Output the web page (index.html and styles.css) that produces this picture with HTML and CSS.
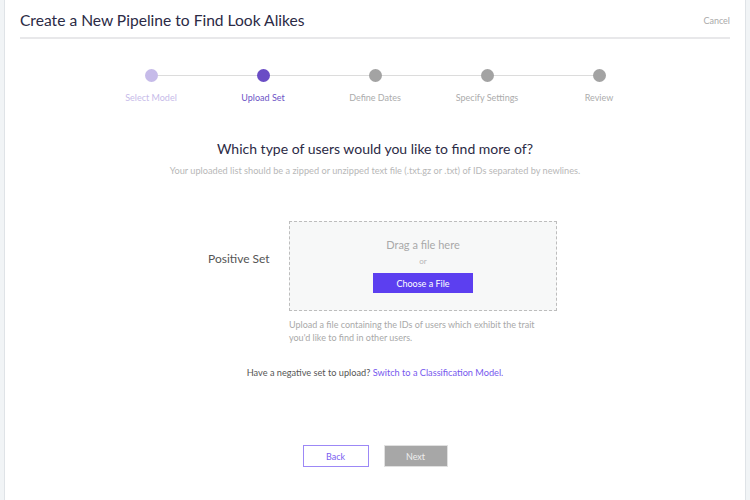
FILE: index.html
```html
<!DOCTYPE html>
<html lang="en">
<head>
    <meta charset="UTF-8">
    <title>Create a New Pipeline</title>
    <link rel="stylesheet" href="styles.css">
</head>
<body>
    <div class="panel">
        <div class="header">
            <h1>Create a New Pipeline to Find Look Alikes</h1>
            <a class="cancel" href="#">Cancel</a>
        </div>

        <div class="steps">
            <div class="step done"><span class="dot"></span><span class="label">Select Model</span></div>
            <div class="step active"><span class="dot"></span><span class="label">Upload Set</span></div>
            <div class="step"><span class="dot"></span><span class="label">Define Dates</span></div>
            <div class="step"><span class="dot"></span><span class="label">Specify Settings</span></div>
            <div class="step"><span class="dot"></span><span class="label">Review</span></div>
        </div>

        <h2>Which type of users would you like to find more of?</h2>
        <p class="sub">Your uploaded list should be a zipped or unzipped text file (.txt.gz or .txt) of IDs separated by newlines.</p>

        <div class="field">
            <div class="field-label">Positive Set</div>
            <div class="field-body">
                <div class="dropzone">
                    <div class="drag">Drag a file here</div>
                    <div class="or">or</div>
                    <button class="choose">Choose a File</button>
                </div>
                <p class="help">Upload a file containing the IDs of users which exhibit the trait you'd like to find in other users.</p>
            </div>
        </div>

        <p class="switch">Have a negative set to upload? <a href="#">Switch to a Classification Model.</a></p>

        <div class="actions">
            <button class="back">Back</button>
            <button class="next">Next</button>
        </div>
    </div>
</body>
</html>
```

FILE: styles.css
```css
html, body {
    margin: 0;
    height: 100%;
}
body {
    font-family: Lato, "Open Sans", sans-serif;
    background-color: #f1f4f6;
    padding: 0 4px;
    box-sizing: border-box;
}
.panel {
    background: #ffffff;
    border-left: 1px solid #dfe3e7;
    border-right: 1px solid #dfe3e7;
    height: 500px;
    padding: 0 15px;
    box-sizing: border-box;
}
.header {
    display: flex;
    justify-content: space-between;
    align-items: center;
    height: 34px;
    padding-top: 3px;
    border-bottom: 2px solid #e8e8ea;
}
h1 {
    margin: 0;
    font-size: 15.6px;
    font-weight: 400;
    color: #2b2a45;
}
.cancel {
    font-size: 9px;
    color: #aaaaaa;
    text-decoration: none;
}
.steps {
    display: flex;
    justify-content: center;
    margin-top: 30px;
}
.step {
    width: 112px;
    display: flex;
    flex-direction: column;
    align-items: center;
    position: relative;
}
.step::before {
    content: "";
    position: absolute;
    top: 6px;
    left: -50%;
    width: 100%;
    height: 1px;
    background: #dcdcdc;
}
.step:first-child::before {
    display: none;
}
.dot {
    width: 13px;
    height: 13px;
    border-radius: 50%;
    background: #a3a3a3;
    position: relative;
    z-index: 1;
}
.label {
    margin-top: 10px;
    font-size: 9px;
    color: #acacac;
}
.done .dot { background: #c6bbe9; }
.done .label { color: #c6bbe9; }
.active .dot { background: #6a4dc5; }
.active .label { color: #6d55c6; }
h2 {
    margin: 37px 0 0;
    text-align: center;
    font-size: 14px;
    font-weight: 400;
    color: #2b2a45;
}
.sub {
    margin: 8px 0 0;
    text-align: center;
    font-size: 9.2px;
    color: #b8b8b8;
}
.field {
    display: flex;
    margin-top: 45px;
    padding-left: 188px;
}
.field-label {
    width: 81px;
    margin-top: 30px;
    font-size: 12px;
    color: #555555;
}
.dropzone {
    width: 266px;
    height: 88px;
    border: 1px dashed #bdbdbd;
    background: #f7f8f8;
    display: flex;
    flex-direction: column;
    align-items: center;
    box-sizing: content-box;
}
.drag {
    margin-top: 16px;
    font-size: 11px;
    color: #a9a9a9;
}
.or {
    margin-top: 5px;
    font-size: 8px;
    color: #b5b5b5;
}
.choose {
    margin-top: 7px;
    width: 100px;
    height: 20px;
    border: none;
    background: #5c3ff0;
    color: #ffffff;
    font-family: inherit;
    font-size: 9px;
    cursor: pointer;
}
.help {
    margin: 7px 0 0;
    width: 266px;
    font-size: 9px;
    line-height: 13px;
    color: #a9a9a9;
}
.switch {
    margin: 23px 0 0;
    text-align: center;
    font-size: 9.2px;
    color: #555555;
}
.switch a {
    color: #7658ee;
    text-decoration: none;
}
.actions {
    display: flex;
    justify-content: center;
    gap: 15px;
    margin-top: 67px;
}
.actions button {
    height: 22px;
    font-family: inherit;
    font-size: 9px;
    cursor: pointer;
}
.back {
    width: 66px;
    border: 1px solid #9c88f6;
    background: #ffffff;
    color: #7a60f0;
}
.next {
    width: 64px;
    border: 1px solid #e0e0e0;
    background: #a7a7a7;
    color: #eeeeee;
}
```
